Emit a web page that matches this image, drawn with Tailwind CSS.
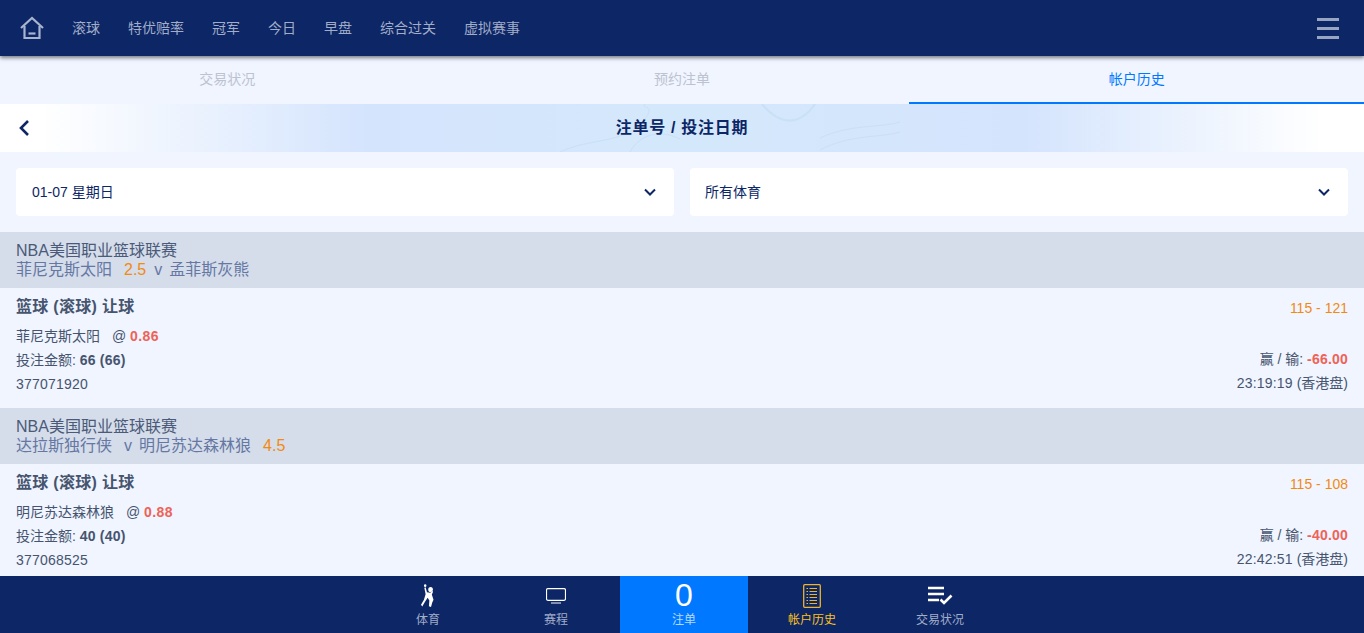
<!DOCTYPE html>
<html lang="zh-CN">
<head>
<meta charset="utf-8">
<script src="https://cdn.jsdelivr.net/npm/@tailwindcss/browser@4"></script>
<title>帐户历史</title>
</head>
<body class="bg-[#f0f5ff] font-['Liberation_Sans','Noto_Sans_CJK_SC',sans-serif]">
<div class="flex h-[633px] w-[1364px] flex-col overflow-hidden">
  <header class="relative z-10 flex h-14 shrink-0 items-center bg-[#0c2666] shadow-[0_2px_4px_rgba(0,0,0,0.5)]">
    <div class="flex w-[72px] justify-start pl-[20px]">
      <svg width="24" height="24" viewBox="0 0 24 24" fill="none" stroke="#a9b4cf" stroke-width="2.2"><path d="M1 12 L12 2 L23 12"/><path d="M4.5 10 V22 H19.5 V10"/><path d="M8.5 17.5 H15.5"/></svg>
    </div>
    <nav class="flex gap-7 text-sm text-[#a2adc8]">
      <a>滚球</a><a>特优赔率</a><a>冠军</a><a>今日</a><a>早盘</a><a>综合过关</a><a>虚拟赛事</a>
    </nav>
    <div class="ml-auto mr-[25px] flex w-[22px] flex-col gap-[6px]">
      <i class="block h-[3px] bg-[#97a4c2]"></i><i class="block h-[3px] bg-[#97a4c2]"></i><i class="block h-[3px] bg-[#97a4c2]"></i>
    </div>
  </header>
  <main class="min-h-0 flex-1 overflow-hidden">
    <div class="grid h-12 grid-cols-3 text-center text-sm leading-[46px] text-[#bcc2cf]">
      <div>交易状况</div><div>预约注单</div>
      <div class="border-b-2 border-[#0078ff] text-[#0078ff]">帐户历史</div>
    </div>
    <div class="relative flex h-12 items-center justify-center overflow-hidden bg-[linear-gradient(90deg,#ffffff_3%,#d4e4fd_27%,#d4e8fb_50%,#d4e4fd_75%,#ffffff_97%)]">
      <svg class="absolute inset-0" width="1364" height="48" fill="none" stroke="#c4dcf2" stroke-width="1" opacity="0.6">
        <path d="M630 48 C640 30 660 25 680 35"/>
        <path d="M762 0 C780 22 800 22 815 0" stroke-width="2"/>
        <path d="M560 48 C590 34 620 40 640 20 S 640 5 645 0"/>
        <path d="M820 34 C850 20 880 24 900 18"/>
        <path d="M820 46 C850 30 880 34 900 28"/>
      </svg>
      <button class="absolute left-[18px] top-[15px]" aria-label="返回">
        <svg class="block" width="12" height="18" viewBox="0 0 12 18" fill="none" stroke="#0c2666" stroke-width="2.6"><path d="M10 2 L3 9 L10 16"/></svg>
      </button>
      <h1 class="relative text-base font-bold tracking-[0.7px] text-[#0c2666]">注单号 / 投注日期</h1>
    </div>
    <div class="grid grid-cols-2 gap-4 p-4">
      <div class="flex h-12 items-center justify-between rounded-sm bg-white px-4 text-sm text-[#0c2666]">
        <span class="mb-[1px]">01-07 星期日</span>
        <svg class="mr-[2px]" width="12" height="8" viewBox="0 0 12 8" fill="none" stroke="#0c2666" stroke-width="2"><path d="M1 1.5 L6 6.5 L11 1.5"/></svg>
      </div>
      <div class="flex h-12 items-center justify-between rounded-sm bg-white px-4 text-sm text-[#0c2666]">
        <span class="mb-[1px] -ml-px">所有体育</span>
        <svg class="mr-[2px]" width="12" height="8" viewBox="0 0 12 8" fill="none" stroke="#0c2666" stroke-width="2"><path d="M1 1.5 L6 6.5 L11 1.5"/></svg>
      </div>
    </div>

    <section>
      <div class="h-14 bg-[#d5dcea] px-4 pt-[9px] text-base leading-[19px]">
        <div class="text-[#4a5a78]">NBA美国职业篮球联赛</div>
        <div class="text-[#6478a3]">菲尼克斯太阳<span class="ml-3 text-[#f28a10]">2.5</span><span class="ml-2 mr-[7px]">v</span>孟菲斯灰熊</div>
      </div>
      <div class="flex h-[120px] justify-between px-4 text-sm text-[#46546e]">
        <div>
          <div class="mt-[9px] h-[23px] text-base leading-5 font-bold tracking-[0.3px]">篮球 (滚球) 让球</div>
          <div class="mt-[4px] h-6 leading-6">菲尼克斯太阳<span class="ml-3">@</span> <b class="tracking-[0.4px] text-[#ef6257]">0.86</b></div>
          <div class="h-6 leading-6">投注金额: <b class="tracking-[0.2px]">66 (66)</b></div>
          <div class="h-6 leading-6 tracking-[0.2px]">377071920</div>
        </div>
        <div class="text-right">
          <div class="mt-[10px] h-[49px] text-[#f28a10]">115 - 121</div>
          <div class="h-6 leading-6">赢 / 输: <b class="tracking-[0.2px] text-[#ef6257]">-66.00</b></div>
          <div class="h-6 leading-6"><span class="tracking-[0.2px]">23:19:19</span> (香港盘)</div>
        </div>
      </div>
    </section>

    <section>
      <div class="h-14 bg-[#d5dcea] px-4 pt-[9px] text-base leading-[19px]">
        <div class="text-[#4a5a78]">NBA美国职业篮球联赛</div>
        <div class="text-[#6478a3]">达拉斯独行侠<span class="ml-3 mr-[7px]">v</span>明尼苏达森林狼<span class="ml-3 text-[#f28a10]">4.5</span></div>
      </div>
      <div class="flex h-[120px] justify-between px-4 text-sm text-[#46546e]">
        <div>
          <div class="mt-[9px] h-[23px] text-base leading-5 font-bold tracking-[0.3px]">篮球 (滚球) 让球</div>
          <div class="mt-[4px] h-6 leading-6">明尼苏达森林狼<span class="ml-3">@</span> <b class="tracking-[0.4px] text-[#ef6257]">0.88</b></div>
          <div class="h-6 leading-6">投注金额: <b class="tracking-[0.2px]">40 (40)</b></div>
          <div class="h-6 leading-6 tracking-[0.2px]">377068525</div>
        </div>
        <div class="text-right">
          <div class="mt-[10px] h-[49px] text-[#f28a10]">115 - 108</div>
          <div class="h-6 leading-6">赢 / 输: <b class="tracking-[0.2px] text-[#ef6257]">-40.00</b></div>
          <div class="h-6 leading-6"><span class="tracking-[0.2px]">22:42:51</span> (香港盘)</div>
        </div>
      </div>
    </section>
  </main>
  <footer class="flex h-[57px] shrink-0 justify-center bg-[#0c2666] pl-1 text-xs text-[#a2adc8]">
    <a class="flex w-32 flex-col items-center">
      <svg class="mt-[8px]" width="15" height="24" viewBox="0 0 18 26" fill="#fff" preserveAspectRatio="none"><circle cx="11.5" cy="6" r="2.8"/><circle cx="5" cy="1.8" r="1.5"/><path d="M4 4 L5.5 3.6 L7.2 9 L11 9.5 L13.5 7.5 L14.5 8.5 L13 11.5 L15 17 L13.5 20 L12 25 L9.5 24 L10 18 L8 15 L5 19 L1.5 24.5 L0 22.5 L3.5 17 L5.5 11 Z"/></svg>
      <span class="mt-[4px]">体育</span>
    </a>
    <a class="flex w-32 flex-col items-center">
      <svg class="mt-[12px]" width="20" height="16" viewBox="0 0 20 16" fill="none" stroke="#fff"><rect x="0.5" y="0.7" width="19" height="11.6" rx="1.5" stroke-width="1.2"/><path d="M5 15 H15" stroke="#cfd6e6" stroke-width="1.2"/></svg>
      <span class="mt-[8px]">赛程</span>
    </a>
    <a class="flex w-32 flex-col items-center bg-[#0078ff] text-[#b6d8ff]">
      <span class="h-[34px] text-[32px] leading-[38px] text-white">0</span>
      <span class="mt-[2px]">注单</span>
    </a>
    <a class="flex w-32 flex-col items-center text-[#ffc21a]">
      <svg class="mt-[8px]" width="18" height="24" viewBox="0 0 18 24" fill="none" stroke="#f0b429"><rect x="0.7" y="0.7" width="16.6" height="22.6" rx="1" stroke-width="1.3"/><path d="M6.5 4.5 H14 M6.5 7.5 H14 M6.5 10.5 H14 M6.5 13.5 H14 M6.5 16.5 H14 M6.5 19.5 H14 M3.5 4.5 H5 M3.5 7.5 H5 M3.5 10.5 H5 M3.5 13.5 H5 M3.5 16.5 H5 M3.5 19.5 H5" stroke-width="1.2"/></svg>
      <span class="mt-[4px]">帐户历史</span>
    </a>
    <a class="flex w-32 flex-col items-center">
      <svg class="mt-[10px]" width="26" height="20" viewBox="0 0 26 20" fill="none" stroke="#fff"><path d="M1 2 H17 M1 8 H17 M1 14 H12" stroke-width="2.4"/><path d="M13.5 13.5 L17 17 L24.5 9.5" stroke-width="2.6"/></svg>
      <span class="mt-[6px]">交易状况</span>
    </a>
  </footer>
</div>
</body>
</html>
